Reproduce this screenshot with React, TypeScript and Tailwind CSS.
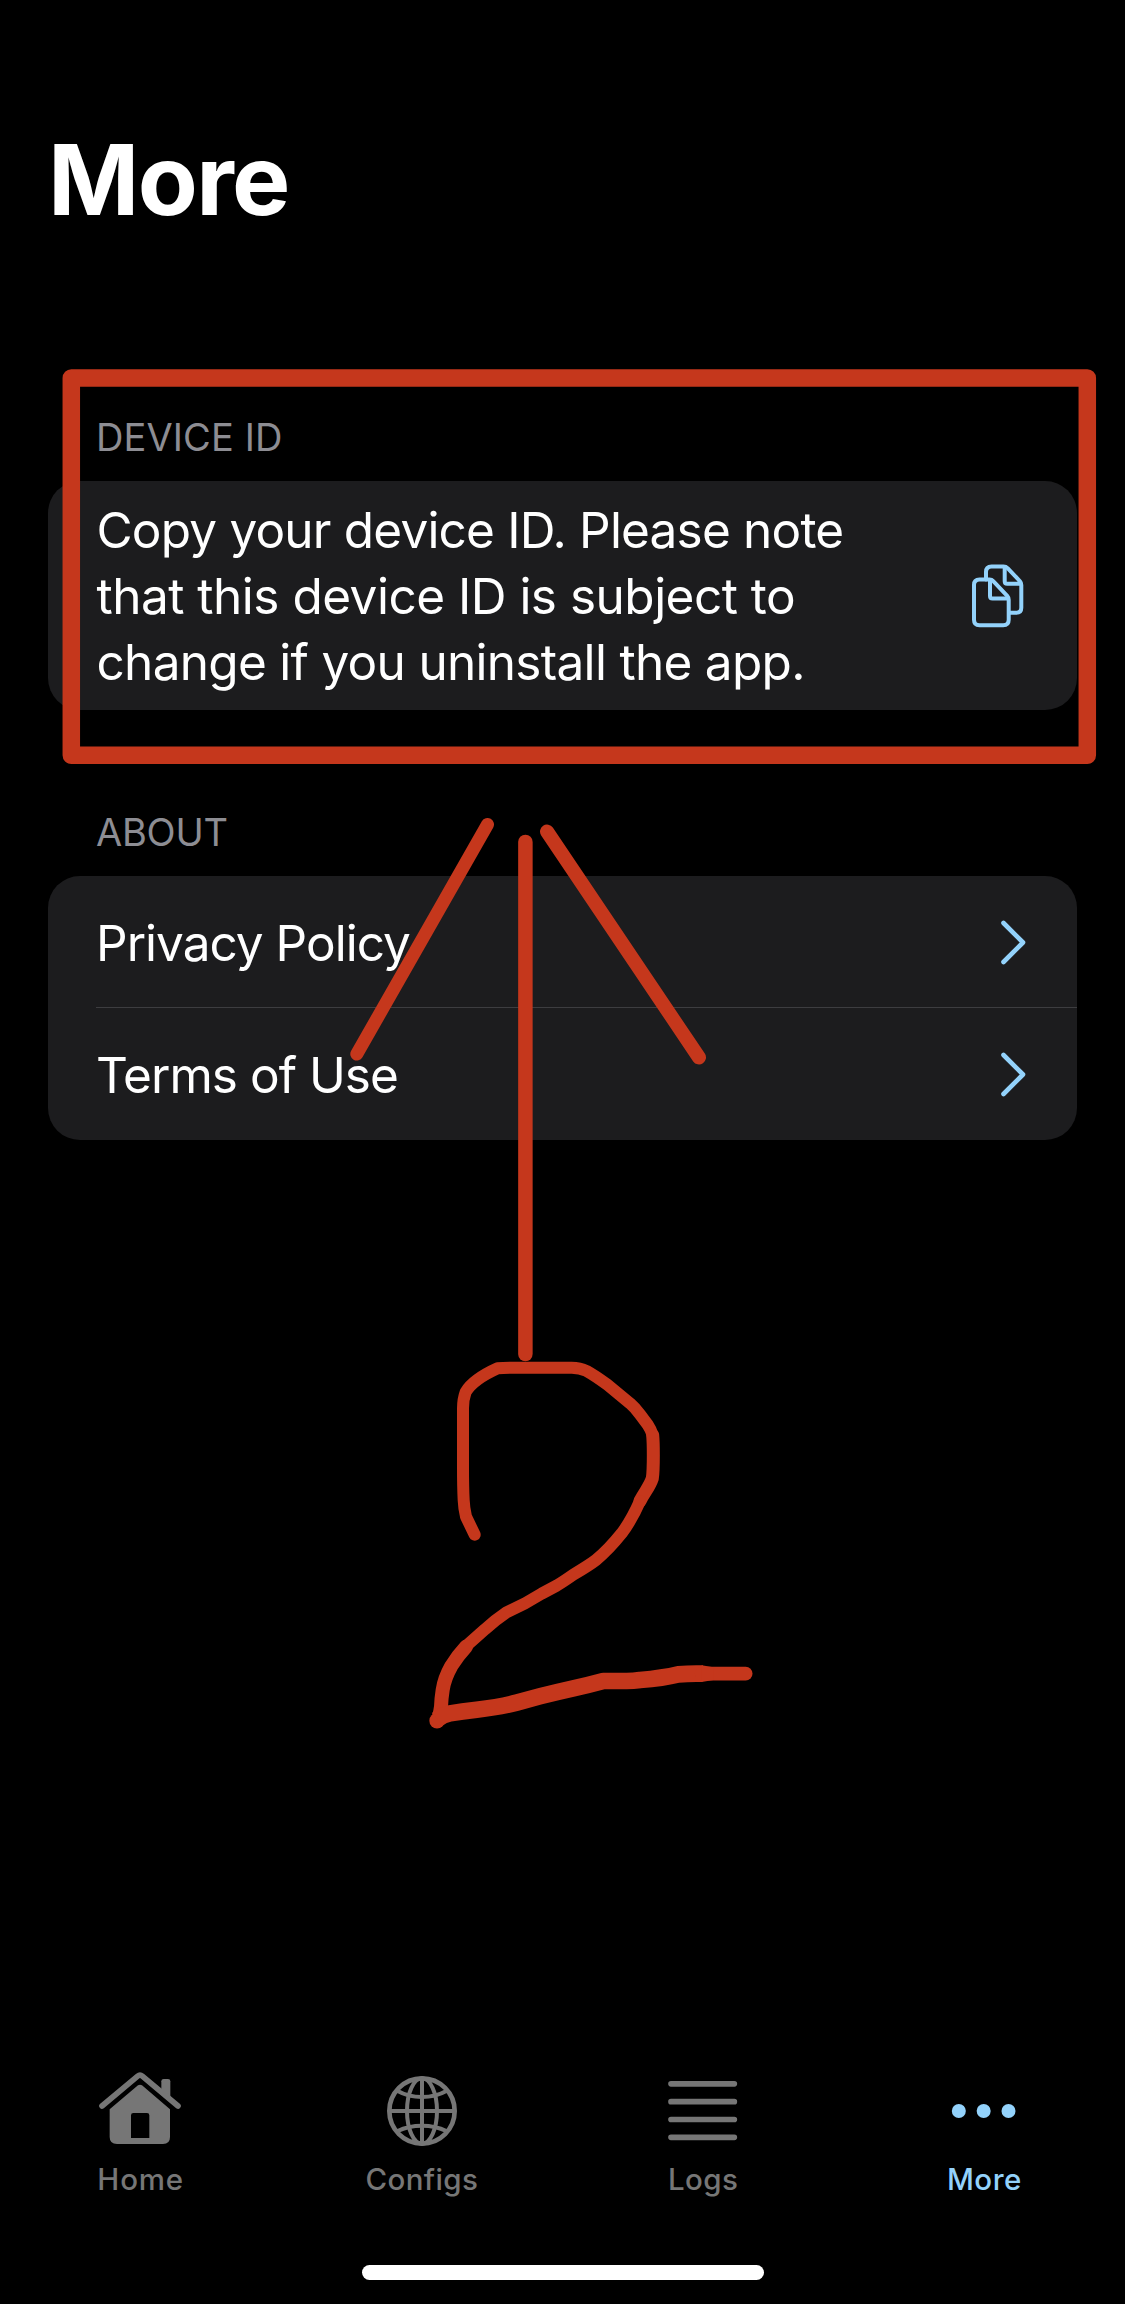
import type { ReactNode } from 'react';

function SectionLabel({ children, tracking }: { children: ReactNode; tracking: string }) {
  return (
    <h2 className={`pl-12 text-[38px] leading-[46px] font-normal text-[#8d8d93] ${tracking}`}>
      {children}
    </h2>
  );
}

function CopyIcon() {
  return (
    <svg
      width="56"
      height="68"
      viewBox="0 0 56 68"
      className="shrink-0"
      fill="none"
      stroke="#93d2fb"
      strokeWidth="4"
      strokeLinejoin="round"
      strokeLinecap="round"
    >
      <path d="M17 17.500V10Q17 4.500 22.500 4.500H34.500Q37 4.500 38.800 6.300L51 19.300Q52.300 20.700 52.300 23V45.800Q52.300 50.800 47.300 50.800H41" />
      <path d="M35.700 5.500V19.300Q35.700 21.800 38.200 21.800H51.500" />
      <path d="M5 23Q5 17.500 10.500 17.500H20.500Q22.800 17.500 24.500 19.300L38.200 33.800Q39.700 35.500 39.700 37.800V57.700Q39.700 63.200 34.200 63.200H10.500Q5 63.200 5 57.700Z" />
      <path d="M21 18.500V34Q21 36.500 23.500 36.500H39" />
    </svg>
  );
}

function Chevron() {
  return (
    <svg
      width="28"
      height="46"
      viewBox="0 0 28 46"
      className="shrink-0"
      fill="none"
      stroke="#93d2fb"
      strokeWidth="4.6"
      strokeLinecap="round"
      strokeLinejoin="round"
    >
      <path d="M4.500 4L24 23.500L4.500 43" />
    </svg>
  );
}

function LinkRow({ label, tracking, className }: { label: string; tracking: string; className: string }) {
  return (
    <div className={`flex items-start justify-between pr-[50px] ${className}`}>
      <span className={`pt-[34px] leading-[66px] ${tracking}`}>{label}</span>
      <span className="flex pt-[43px]">
        <Chevron />
      </span>
    </div>
  );
}

function HomeIcon() {
  return (
    <svg width="94" height="100" viewBox="101 63 282 300" fill="#767676">
      <path
        fillRule="evenodd"
        d="M233 136Q239 132 245 136L329 208V291Q329 312 308 312H170Q148 312 148 291V208ZM219 219Q212 219 212 226V294H267V226Q267 219 260 219Z"
      />
      <path d="M303 150V124Q303 117 310 117H323Q330 117 330 124V174Z" />
      <path
        d="M125 198L232 108.500Q239 102.500 246 108.500L353 198"
        fill="none"
        stroke="#767676"
        strokeWidth="17"
        strokeLinecap="round"
        strokeLinejoin="round"
      />
    </svg>
  );
}

function GlobeIcon() {
  return (
    <svg width="94" height="100" viewBox="105 63 282 300" fill="none" stroke="#767676" strokeWidth="12">
      <circle cx="246" cy="213" r="98" strokeWidth="14" />
      <ellipse cx="246" cy="213" rx="45" ry="98" />
      <path d="M246 115V311M148 213H344" />
      <path d="M173 153Q205 171 246 171T319 153" />
      <path d="M173 273Q205 257 246 257T319 273" />
    </svg>
  );
}

function LinesIcon() {
  return (
    <svg width="94" height="100" viewBox="108 63 282 300" stroke="#767676" strokeWidth="17" strokeLinecap="round">
      <path d="M153 131.500H343M153 185H343M153 238.500H343M153 292H343" />
    </svg>
  );
}

function DotsIcon() {
  return (
    <svg width="94" height="100" viewBox="111 63 282 300" fill="#93d2fb">
      <circle cx="176.500" cy="213" r="21" />
      <circle cx="251" cy="213" r="21" />
      <circle cx="325.500" cy="213" r="21" />
    </svg>
  );
}

const tabs = [
  { label: 'Home', icon: <HomeIcon />, style: 'text-[#767676] tracking-[0.8px]' },
  { label: 'Configs', icon: <GlobeIcon />, style: 'text-[#767676] tracking-[0.4px]' },
  { label: 'Logs', icon: <LinesIcon />, style: 'text-[#767676] tracking-[0.4px]' },
  { label: 'More', icon: <DotsIcon />, style: 'text-[#93d2fb] tracking-[0.47px]' },
];

function Annotations() {
  return (
    <svg
      width="1125"
      height="2304"
      viewBox="0 0 1125 2304"
      className="pointer-events-none absolute inset-0"
      fill="none"
      stroke="#c5371c"
      strokeLinecap="round"
      strokeLinejoin="round"
    >
      <rect x="71.300" y="378" width="1016" height="377.300" strokeWidth="17.500" />
      <path d="M487.500 824.500L356.800 1054" strokeWidth="13" />
      <path d="M525.400 842V1354" strokeWidth="14.500" />
      <path d="M547 831.500L699 1057.500" strokeWidth="14" />
      <g transform="translate(400 1300) scale(0.33333)">
        <path
          strokeWidth="36"
          d="M224 704L198 650Q192 625 191 600Q189 560 189 500V325Q189 298 197 276Q220 238 293 205Q310 203 340 203H515Q540 203 560 213Q585 227 622 254L690 310Q706 324 720 343L743 374Q753 389 758 405"
        />
        <path
          strokeWidth="39"
          d="M758 405Q760 425 760 465Q760 515 757 535Q752 550 737 574Q726 591 720 603"
        />
        <path
          strokeWidth="36"
          d="M720 603Q694 662 665 700Q625 750 588 780Q570 794 520 824Q490 845 470 857L425 881L375 910L318 938Q285 960 255 988L196 1040"
        />
        <path
          strokeWidth="42"
          d="M198 1040Q172 1068 154 1098Q133 1135 128 1170Q124 1195 123 1220Q119 1248 113 1262"
        />
        <path strokeWidth="46" d="M111 1262V1262.500" />
        <path
          strokeWidth="50"
          strokeLinecap="butt"
          d="M112 1258Q128 1244 150 1240Q185 1234 230 1229Q300 1221 350 1208L420 1189Q470 1176 520 1165Q570 1154 610 1143H680Q700 1143 720 1140Q790 1134 835 1123Q870 1120 908 1121"
        />
        <path strokeWidth="41" d="M905 1121H1037" />
        <path fill="#c5371c" stroke="none" d="M905 1096L940 1102V1140L905 1146Z" />
      </g>
    </svg>
  );
}

export default function App() {
  return (
    <div className="relative flex h-[2304px] w-[1125px] flex-col overflow-hidden bg-black pt-[120px] font-['Inter',sans-serif] text-white">
      <h1 className="pl-12 text-[98px] leading-[120px] font-bold tracking-[-1.6px]">More</h1>

      <main className="mt-[174px] flex grow flex-col px-12 text-[49.5px]">
        <section>
          <SectionLabel tracking="tracking-[0.1px]">DEVICE ID</SectionLabel>
          <div className="mt-[21px] flex h-[229px] items-center justify-between rounded-[32px] bg-[#1c1c1e] pr-[52px] pl-[48.500px]">
            <p className="leading-[66px]">
              <span className="block tracking-[-0.80px]">Copy your device ID. Please note </span>
              <span className="block tracking-[-0.50px]">that this device ID is subject to </span>
              <span className="block tracking-[-0.70px]">change if you uninstall the app.</span>
            </p>
            <CopyIcon />
          </div>
        </section>

        <section className="mt-[99px]">
          <SectionLabel tracking="tracking-[-0.23px]">ABOUT</SectionLabel>
          <div className="mt-[21px] rounded-[32px] bg-[#1c1c1e] pl-12">
            <LinkRow
              label="Privacy Policy"
              tracking="tracking-[-0.98px]"
              className="h-[132px] border-b border-[#3d3d40]"
            />
            <LinkRow label="Terms of Use" tracking="tracking-[-0.97px]" className="h-[132px]" />
          </div>
        </section>
      </main>

      <nav className="grid h-[204px] grid-cols-4">
        {tabs.map((tab) => (
          <div key={tab.label} className="flex flex-col items-center">
            {tab.icon}
            <span className={`text-[29.5px] leading-[36px] font-medium ${tab.style}`}>{tab.label}</span>
          </div>
        ))}
      </nav>
      <div className="mb-6 ml-[362px] h-[15px] w-[402px] shrink-0 rounded-full bg-white" />

      <Annotations />
    </div>
  );
}
